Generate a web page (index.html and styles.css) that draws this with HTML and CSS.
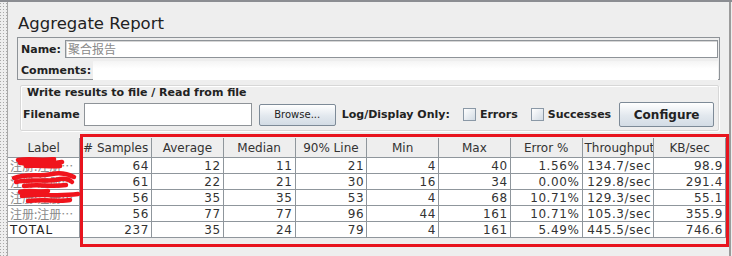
FILE: index.html
```html
<!DOCTYPE html>
<html lang="en">
<head>
    <meta charset="UTF-8">
    <title>Aggregate Report</title>
    <link rel="stylesheet" href="styles.css">
</head>
<body>
    <div class="window">
        <div class="splitter"></div>
        <div class="panel">
            <h1 class="title">Aggregate Report</h1>

            <div class="namebox">
                <div class="row">
                    <span class="lbl">Name:</span>
                    <div class="field name-field">聚合报告</div>
                </div>
                <div class="row">
                    <span class="lbl">Comments:</span>
                    <div class="field comments-field"></div>
                </div>
            </div>

            <div class="filegroup">
                <div class="legend">Write results to file / Read from file</div>
                <div class="controls">
                    <span class="lbl">Filename</span>
                    <div class="field file-field"></div>
                    <button class="btn browse">Browse...</button>
                    <span class="lbl">Log/Display Only:</span>
                    <span class="check"><span class="box"></span>Errors</span>
                    <span class="check"><span class="box"></span>Successes</span>
                    <button class="btn configure">Configure</button>
                </div>
            </div>

            <div class="results">
                <table class="grid">
                    <thead>
                        <tr>
                            <th>Label</th>
                            <th># Samples</th>
                            <th>Average</th>
                            <th>Median</th>
                            <th>90% Line</th>
                            <th>Min</th>
                            <th>Max</th>
                            <th>Error %</th>
                            <th>Throughput</th>
                            <th>KB/sec</th>
                        </tr>
                    </thead>
                    <tbody>
                        <tr>
                            <td class="label">注册:注册…</td>
                            <td>64</td><td>12</td><td>11</td><td>21</td><td>4</td><td>40</td><td>1.56%</td><td>134.7/sec</td><td>98.9</td>
                        </tr>
                        <tr>
                            <td class="label">注册:注册…</td>
                            <td>61</td><td>22</td><td>21</td><td>30</td><td>16</td><td>34</td><td>0.00%</td><td>129.8/sec</td><td>291.4</td>
                        </tr>
                        <tr>
                            <td class="label">注册:注册…</td>
                            <td>56</td><td>35</td><td>35</td><td>53</td><td>4</td><td>68</td><td>10.71%</td><td>129.3/sec</td><td>55.1</td>
                        </tr>
                        <tr>
                            <td class="label">注册:注册…</td>
                            <td>56</td><td>77</td><td>77</td><td>96</td><td>44</td><td>161</td><td>10.71%</td><td>105.3/sec</td><td>355.9</td>
                        </tr>
                        <tr>
                            <td class="label total">TOTAL</td>
                            <td>237</td><td>35</td><td>24</td><td>79</td><td>4</td><td>161</td><td>5.49%</td><td>445.5/sec</td><td>746.6</td>
                        </tr>
                    </tbody>
                </table>

                <!-- red marker drawn over the screenshot -->
                <div class="highlight"></div>
                <svg class="scribble" width="80" height="52" viewBox="0 0 80 52">
                    <path d="M10 3 C22 1 34 4 46 2 M12 6 C26 4 40 8 54 5 M18 9 C30 8 42 10 52 9" />
                    <path d="M6 21 C18 16 30 20 44 17 C54 15 62 18 66 20 M8 25 C22 21 38 26 52 22 C58 21 62 23 64 25 M16 29 C30 27 44 30 58 28" />
                    <path d="M12 35 C22 32 30 36 40 34 M14 39 C30 36 48 40 70 37 M20 44 C36 42 52 45 62 43" />
                </svg>
            </div>
        </div>
    </div>
</body>
</html>
```

FILE: styles.css
```css
* {
    box-sizing: border-box;
}

body {
    margin: 0;
    background-color: #eeeeee;
    font-family: 'DejaVu Sans', 'Noto Sans CJK SC', sans-serif;
    color: #333333;
}

.window {
    display: flex;
    height: 256px;
    border-top: 2px solid #8b8d92;
}

.splitter {
    width: 7px;
    background-color: #eeeeee;
    background-image: radial-gradient(#a9a9a9 0.7px, transparent 0.8px);
    background-size: 3px 3px;
    background-position: 2px 0;
}

.panel {
    width: 724px;
    border-left: 1px solid #a9a9a9;
    border-right: 2px solid #9b9b9b;
    background-color: #eeeeee;
}

.title {
    margin: 0;
    padding: 12px 0 0 10px;
    height: 35px;
    font-size: 16.5px;
    font-weight: normal;
    color: #222222;
}

.lbl {
    font-size: 11px;
    font-weight: bold;
    color: #222222;
    white-space: nowrap;
}

.field {
    background: #ffffff;
}

/* name / comments */
.namebox {
    margin-left: 9px;
    width: 703px;
    height: 43px;
    border: 1px solid #8e9398;
    padding: 1px 1px 0 3px;
}

.namebox .row {
    display: flex;
    align-items: center;
    height: 20px;
}

.namebox .row + .row {
    margin-top: 1px;
}

.name-field {
    flex: 1;
    height: 18px;
    margin-left: 4px;
    border: 1px solid #8e9398;
    box-shadow: inset 1px 1px 0 #d6d6d6;
    padding-left: 2px;
    font-size: 12px;
    line-height: 16px;
    color: #8a8a8a;
    font-family: 'Noto Sans CJK SC', sans-serif;
}

.comments-field {
    flex: 1;
    height: 19px;
    margin-left: 2px;
    background: linear-gradient(#f4f4f4, #ffffff 40%);
}

/* write results group */
.filegroup {
    margin: 5px 0 0 12px;
    width: 699px;
    height: 46px;
    border: 1px solid #d7d7d7;
    box-shadow: inset 1px 1px 0 #ffffff, 1px 1px 0 #ffffff;
    border-radius: 2px;
    padding: 0 0 0 2px;
}

.legend {
    font-size: 11px;
    font-weight: bold;
    color: #222222;
    padding-left: 4px;
    height: 14px;
    line-height: 14px;
}

.controls {
    display: flex;
    align-items: center;
    margin-top: 2px;
}

.file-field {
    width: 168px;
    height: 23px;
    margin-left: 4px;
    border: 1px solid #8e9398;
}

.btn {
    font-family: 'DejaVu Sans', sans-serif;
    color: #222222;
    border: 1px solid #7d8a97;
    border-radius: 2px;
    background: linear-gradient(#ffffff, #e2e8ee 55%, #d3dce5);
    padding: 0;
}

.browse {
    width: 77px;
    height: 22px;
    margin: 0 6px 0 7px;
    font-size: 10px;
}

.configure {
    width: 95px;
    height: 25px;
    margin-left: 8px;
    font-size: 12px;
    font-weight: bold;
}

.check {
    display: flex;
    align-items: center;
    font-size: 11px;
    font-weight: bold;
    color: #222222;
    margin-left: 13px;
}

.check + .check {
    margin-left: 13px;
}

.check .box {
    width: 13px;
    height: 13px;
    margin-right: 4px;
    border: 1px solid #8a98a6;
    background: linear-gradient(135deg, #ffffff, #d2dbe4);
}

/* results table */
.results {
    position: relative;
    margin-top: 7px;
}

.grid {
    width: 718px;
    border-collapse: collapse;
    table-layout: fixed;
    font-size: 12px;
    background: #ffffff;
}

.grid th,
.grid td {
    border: 1px solid #8f969c;
    padding: 0 2px;
    white-space: nowrap;
    overflow: hidden;
    color: #333333;
}

.grid th {
    height: 19px;
    font-weight: normal;
    text-align: center;
    background: #eeeeee;
    border-top-color: #eeeeee;
}

.grid td {
    height: 16px;
    line-height: 14px;
    text-align: right;
    letter-spacing: 0.6px;
}

.grid tr > :first-child {
    border-left: none;
}

.grid td.label {
    text-align: left;
    color: #8a8a8a;
    letter-spacing: 0;
    font-family: 'Noto Sans CJK SC', sans-serif;
    font-size: 12px;
}

.grid td.total {
    color: #222222;
    font-family: 'DejaVu Sans', sans-serif;
    letter-spacing: 1px;
}

.highlight {
    position: absolute;
    left: 72px;
    top: -4px;
    width: 649px;
    height: 113px;
    border: 3px solid #e8141e;
    pointer-events: none;
}

.scribble {
    position: absolute;
    left: 0;
    top: 19px;
    fill: none;
    stroke: #f0141c;
    stroke-width: 4.5;
    stroke-linecap: round;
}
```
